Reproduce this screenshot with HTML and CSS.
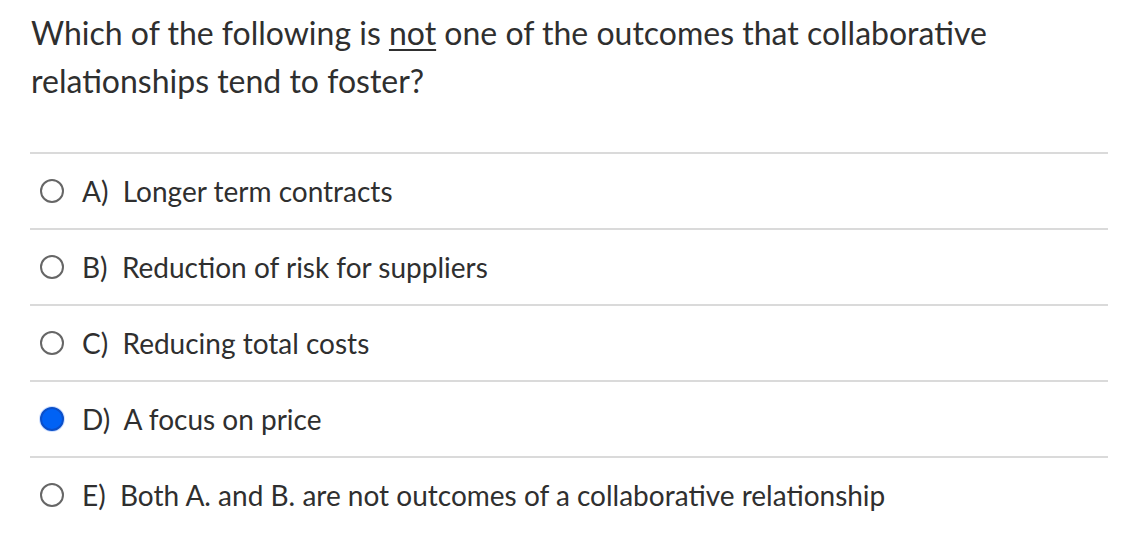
FILE: index.html
```html
<!DOCTYPE html>
<html>
<head>
<meta charset="utf-8">
<link rel="stylesheet" href="styles.css">
</head>
<body>
<div class="quiz">
  <div class="question">Which of the following is <u>not</u> one of the outcomes that collaborative relationships tend to foster?</div>
  <div class="answers">
    <label class="answer"><span class="radio"></span><span class="text">A)&nbsp; Longer term contracts</span></label>
    <label class="answer"><span class="radio"></span><span class="text">B)&nbsp; Reduction of risk for suppliers</span></label>
    <label class="answer"><span class="radio"></span><span class="text">C)&nbsp; Reducing total costs</span></label>
    <label class="answer"><span class="radio checked"></span><span class="text">D)&nbsp; A focus on price</span></label>
    <label class="answer"><span class="radio"></span><span class="text">E)&nbsp; Both A. and B. are not outcomes of a collaborative relationship</span></label>
  </div>
</div>
</body>
</html>
```

FILE: styles.css
```css
html, body {
  margin: 0;
  padding: 0;
  background: #fff;
}
body {
  font-family: Lato, "Noto Sans", sans-serif;
  color: #2f2f2f;
}
.quiz {
  padding: 9px 26px 0 30px;
}
.question {
  font-size: 32px;
  line-height: 48px;
  padding-left: 1px;
  padding-right: 80px;
}
.question u {
  text-decoration-thickness: 2px;
  text-underline-offset: 4px;
}
.answers {
  margin-top: 47px;
}
.answer {
  display: flex;
  align-items: center;
  height: 74px;
  border-top: 2px solid #dadada;
  padding-left: 10px;
}
.radio {
  box-sizing: border-box;
  width: 24px;
  height: 24px;
  border-radius: 50%;
  border: 2px solid #666;
  margin-right: 18px;
  flex: none;
}
.radio.checked {
  border: 2px solid #0a4fc9;
  background: #0062f5;
  box-shadow: 0 0 0 1px #cfe0ff;
}
.text {
  font-size: 28px;
}
```
